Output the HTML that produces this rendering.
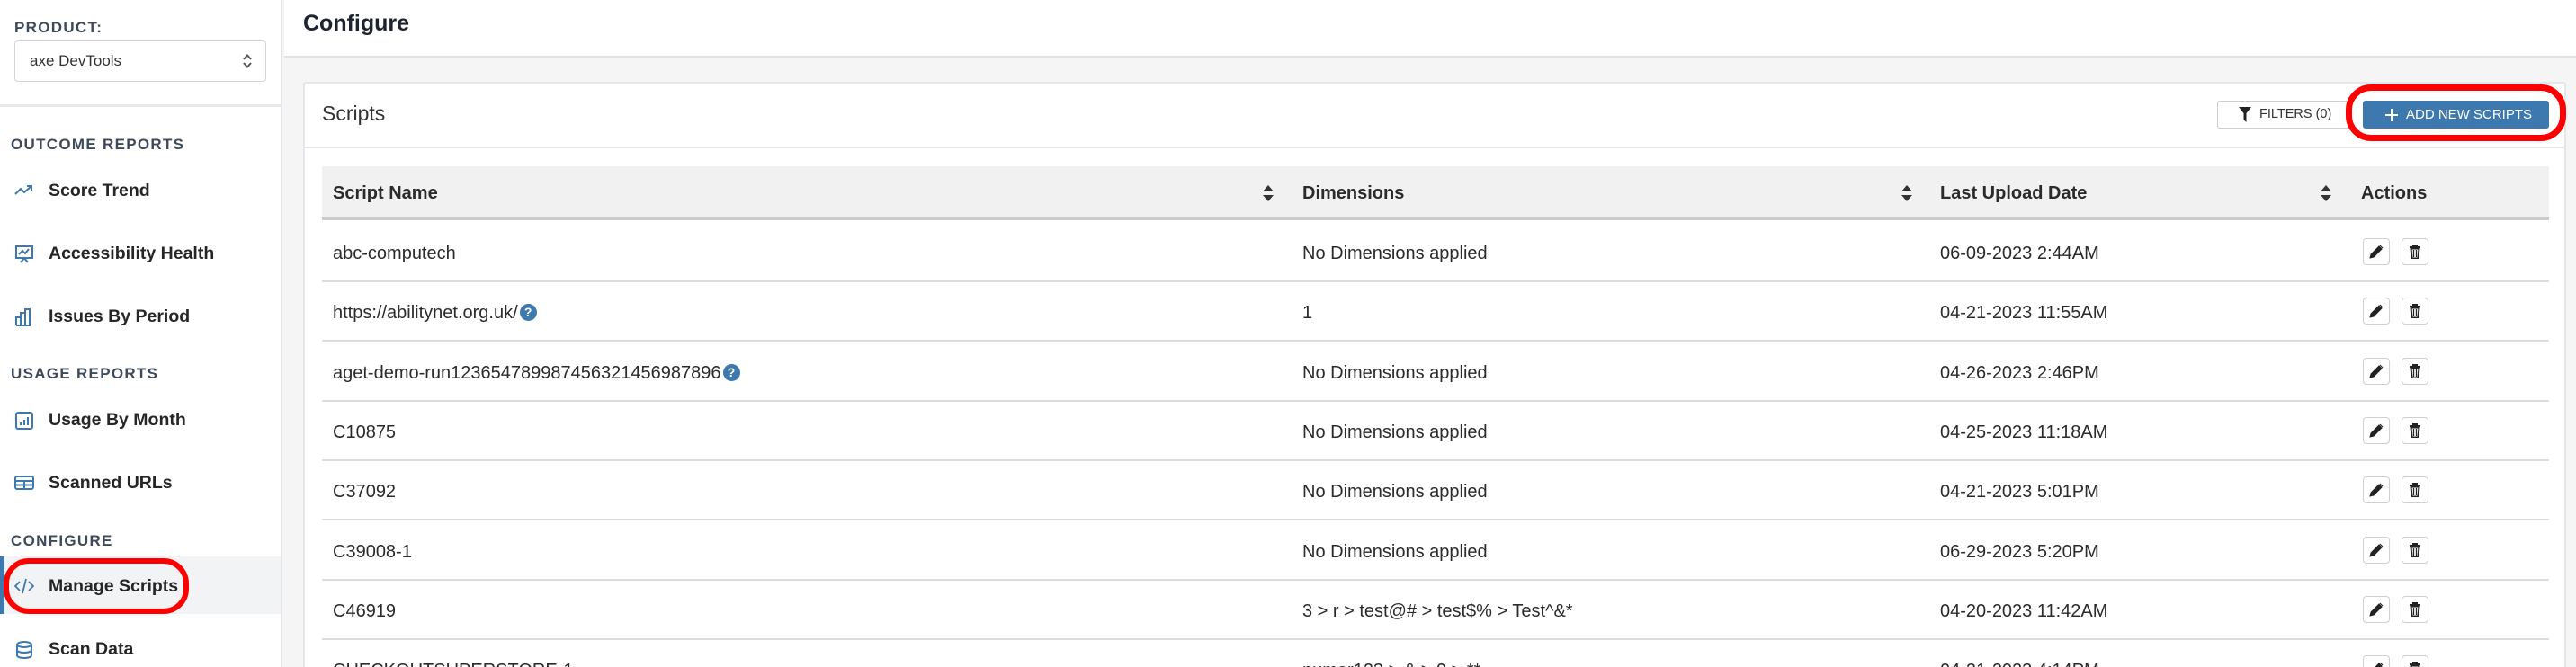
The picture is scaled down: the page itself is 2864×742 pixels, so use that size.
<!DOCTYPE html>
<html><head><meta charset="utf-8"><style>
*{box-sizing:border-box;margin:0;padding:0}
html{width:2864px;height:742px;overflow:hidden}
body{width:2864px;height:742px;overflow:hidden;background:#f5f5f6;font-family:"Liberation Sans",Arial,sans-serif;position:relative;color:#222}
.abs{position:absolute}
#side{left:0;top:0;width:314px;height:742px;background:#fff;border-right:2px solid #e4e4e8}
.lab{position:absolute;left:12px;font-size:17px;font-weight:bold;color:#3d4a5a;letter-spacing:1.3px;line-height:20px}
.item{position:absolute;left:0;width:312px;height:40px;line-height:40px}
.item svg{position:absolute;left:16px;top:10px}
.item span{position:absolute;left:54px;font-size:19.5px;font-weight:bold;color:#262626}
#hdr{left:316px;top:0;width:2548px;height:64px;background:#fff;border-bottom:2px solid #e2e2e6}
#card{left:337px;top:91px;width:2516px;height:660px;background:#fff;border:2px solid #e6e6ea;border-radius:3px}
.th{position:absolute;top:185px;height:60px;line-height:60px;font-size:20px;font-weight:bold;color:#2b2b2b}
.td{position:absolute;font-size:20px;color:#2b2b2b;line-height:24px}
.sep{position:absolute;left:358px;width:2476px;height:2px;background:#dcdcdc}
.btn{position:absolute;width:30px;height:30px;border:1.5px solid #cfcfcf;border-radius:4px;background:#fff}
.btn svg{position:absolute;left:6px;top:6px}
.q{display:inline-block;width:19px;height:19px;border-radius:50%;background:#3d78ae;color:#fff;font-size:14px;font-weight:bold;text-align:center;line-height:19px;vertical-align:2px;margin-left:2px}
</style></head><body>
<div id="side" class="abs">
  <div class="lab" style="left:16px;top:21px">PRODUCT:</div>
  <div class="abs" style="left:16px;top:45px;width:280px;height:46px;border:1.5px solid #d4d4d8;border-radius:4px;font-size:17px;color:#333;line-height:43px;padding-left:16px">axe DevTools
    <svg class="abs" style="right:14px;top:13px" width="12" height="18" viewBox="0 0 12 18"><path d="M2 7 6 2.5 10 7M2 11 6 15.5 10 11" fill="none" stroke="#555" stroke-width="2"/></svg></div>
  <div class="abs" style="left:0;top:116px;width:314px;height:3px;background:#e8e8ec"></div>
  <div class="lab" style="top:151px">OUTCOME REPORTS</div>
  <div class="item" style="top:192px"><svg width="22" height="20" viewBox="0 0 22 20"><path d="M1 14 7 8 11 12 19 5M14 5h5v5" fill="none" stroke="#3d78ae" stroke-width="2"/></svg><span>Score Trend</span></div>
  <div class="item" style="top:262px"><svg width="22" height="22" viewBox="0 0 22 22"><rect x="2" y="2" width="18" height="13" fill="none" stroke="#3d78ae" stroke-width="2"/><path d="M5 11 9 7 12 10 16 5M7 20 11 15 15 20" fill="none" stroke="#3d78ae" stroke-width="2"/></svg><span>Accessibility Health</span></div>
  <div class="item" style="top:332px"><svg width="22" height="22" viewBox="0 0 22 22"><path d="M2 20V11h5v9M7 20V6h5v14M12 20V2h5v18H2" fill="none" stroke="#3d78ae" stroke-width="2"/></svg><span>Issues By Period</span></div>
  <div class="lab" style="top:406px">USAGE REPORTS</div>
  <div class="item" style="top:447px"><svg width="22" height="22" viewBox="0 0 22 22"><rect x="2" y="2" width="18" height="18" rx="2" fill="none" stroke="#3d78ae" stroke-width="2"/><path d="M7 16v-3M11 16v-6M15 16V7" stroke="#3d78ae" stroke-width="2"/></svg><span>Usage By Month</span></div>
  <div class="item" style="top:517px"><svg width="22" height="20" viewBox="0 0 22 20"><rect x="1" y="3" width="20" height="14" rx="2" fill="none" stroke="#3d78ae" stroke-width="2"/><path d="M1 8h20M1 12.5h20M11 8v9" stroke="#3d78ae" stroke-width="2"/></svg><span>Scanned URLs</span></div>
  <div class="lab" style="top:592px">CONFIGURE</div>
  <div class="abs" style="left:0;top:619px;width:312px;height:64px;background:#f2f3f5"></div>
  <div class="abs" style="left:0;top:619px;width:5px;height:64px;background:#3d78ae"></div>
  <div class="item" style="top:632px"><svg width="22" height="20" viewBox="0 0 22 20"><path d="M6 5 1 10 6 15M16 5 21 10 16 15M13 2 9 18" fill="none" stroke="#3d78ae" stroke-width="1.8"/></svg><span>Manage Scripts</span></div>
  <div class="abs" style="left:4px;top:621px;width:206px;height:62px;border:6px solid #f00;border-radius:28px"></div>
  <div class="item" style="top:702px"><svg width="22" height="22" viewBox="0 0 22 22"><ellipse cx="11" cy="5" rx="8" ry="3" fill="none" stroke="#3d78ae" stroke-width="2"/><path d="M3 5v12c0 2 4 3 8 3s8-1 8-3V5M3 11c0 2 4 3 8 3s8-1 8-3" fill="none" stroke="#3d78ae" stroke-width="2"/></svg><span>Scan Data</span></div>
</div>
<div id="hdr" class="abs"><div class="abs" style="left:21px;top:12px;font-size:25px;font-weight:bold;color:#1c2430">Configure</div></div>
<div id="card" class="abs"></div>
<div class="abs" style="left:339px;top:163px;width:2512px;height:2px;background:#e6e6ea"></div>
<div class="abs" style="left:358px;top:113px;font-size:23px;color:#333">Scripts</div>
<div class="abs" style="left:2465px;top:112px;width:148px;height:31px;border:1.5px solid #ccc;border-radius:3px;font-size:14.5px;color:#333;line-height:28px;padding-left:46px">FILTERS (0)</div>
<svg class="abs" style="left:2489px;top:119px" width="14" height="17" viewBox="0 0 14 17"><path d="M0 0h14L8.5 7v10L5.5 14V7z" fill="#222"/></svg>
<div class="abs" style="left:2627px;top:112px;width:207px;height:31px;background:#3d78ae;border-radius:3px;color:#fff;font-size:15px;line-height:31px;padding-left:48px">ADD NEW SCRIPTS</div>
<svg class="abs" style="left:2652px;top:121px" width="14" height="14"><path d="M7 0v14M0 7h14" stroke="#fff" stroke-width="2"/></svg>
<div class="abs" style="left:2608px;top:94px;width:245px;height:63px;border:7px solid #f00;border-radius:28px"></div>
<div class="abs" style="left:358px;top:185px;width:2476px;height:60px;background:#f1f1f1;border-bottom:4px solid #cbcbcb"></div>
<div class="th" style="left:370px">Script Name</div>
<div class="th" style="left:1448px">Dimensions</div>
<div class="th" style="left:2157px">Last Upload Date</div>
<div class="th" style="left:2625px">Actions</div>
<svg class="abs" style="left:1403px;top:204px" width="14" height="22" viewBox="0 0 14 22"><path d="M1 9 7 2 13 9zM1 13 7 20 13 13z" fill="#333"/></svg>
<svg class="abs" style="left:2113px;top:204px" width="14" height="22" viewBox="0 0 14 22"><path d="M1 9 7 2 13 9zM1 13 7 20 13 13z" fill="#333"/></svg>
<svg class="abs" style="left:2579px;top:204px" width="14" height="22" viewBox="0 0 14 22"><path d="M1 9 7 2 13 9zM1 13 7 20 13 13z" fill="#333"/></svg>
<div id="rows"></div>
<script>
var d=[["abc-computech","No Dimensions applied","06-09-2023 2:44AM"],["https://abilitynet.org.uk/<span class=q>?</span>","1","04-21-2023 11:55AM"],["aget-demo-run123654789987456321456987896<span class=q>?</span>","No Dimensions applied","04-26-2023 2:46PM"],["C10875","No Dimensions applied","04-25-2023 11:18AM"],["C37092","No Dimensions applied","04-21-2023 5:01PM"],["C39008-1","No Dimensions applied","06-29-2023 5:20PM"],["C46919","3 &gt; r &gt; test@# &gt; test$% &gt; Test^&amp;*","04-20-2023 11:42AM"],["CHECKOUTSUPERSTORE-1","numer123 &gt; &amp; &gt; 9 &gt; **","04-21-2023 4:14PM"]];
var h="",pen='<svg width="16" height="16" viewBox="0 0 16 16"><path d="M1 15l1-4 9-9 3 3-9 9z M12 1l3 3" fill="#222" stroke="#222" stroke-width="1"/></svg>',tr='<svg width="16" height="16" viewBox="0 0 16 16"><path d="M2 3h12M6 3V1h4v2M3.5 4.5h9l-1 11h-7z" fill="none" stroke="#222" stroke-width="2"/><path d="M6.5 6v8M9.5 6v8" stroke="#222" stroke-width="1.3"/></svg>';
for(var i=0;i<d.length;i++){var t=249+i*66.3,c=t+21;
h+='<div class="td" style="left:370px;top:'+c+'px">'+d[i][0]+'</div><div class="td" style="left:1448px;top:'+c+'px">'+d[i][1]+'</div><div class="td" style="left:2157px;top:'+c+'px">'+d[i][2]+'</div>';
h+='<div class="btn" style="left:2627px;top:'+(t+16)+'px">'+pen+'</div><div class="btn" style="left:2670px;top:'+(t+16)+'px">'+tr+'</div>';
if(i<7)h+='<div class="sep" style="top:'+(t+63)+'px"></div>';}
document.getElementById("rows").innerHTML=h;
</script>
</body></html>
